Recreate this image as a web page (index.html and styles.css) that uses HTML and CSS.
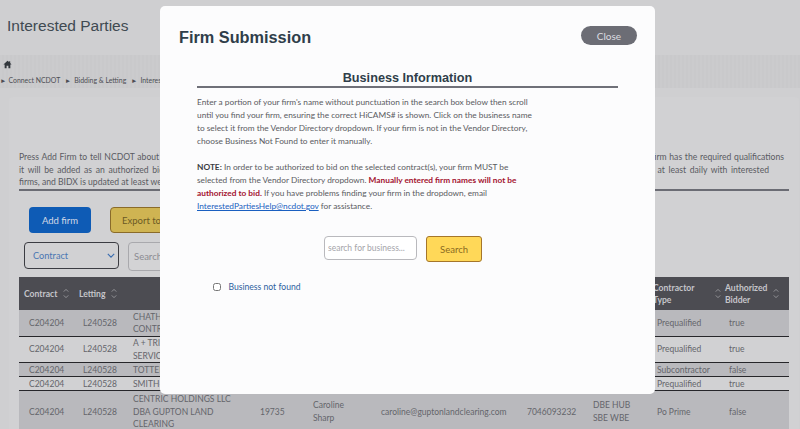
FILE: index.html
```html
<!DOCTYPE html>
<html lang="en">
<head>
  <meta charset="UTF-8">
  <meta name="viewport" content="width=device-width, initial-scale=1.0">
  <title>Interested Parties</title>
  <link rel="stylesheet" href="styles.css">
</head>
<body>
  <h1 class="page-title">Interested Parties</h1>

  <nav class="crumbs">
    <svg class="home-icon" viewBox="0 0 12 12" width="9" height="9"><path d="M6 1 0.6 6h1.6v5h2.6V7.6h2.4V11h2.6V6h1.6L9.6 4.1V1.6H8.2v1.2z" fill="#33383d"/></svg>
    <div class="crumb-line">
      <span class="arrow arrow-first">&#9658;</span><span>Connect NCDOT</span>
      <span class="arrow">&#9658;</span><span>Bidding &amp; Letting</span>
      <span class="arrow">&#9658;</span><span>Interested Parties</span>
    </div>
  </nav>

  <main class="card">
    <div class="intro">
      <p class="line-long">Press Add Firm to tell NCDOT about your firm's interest in bidding on the selected contract or contracts below. NCDOT reviews each submission to confirm that the firm has the required qualifications</p>
      <p class="line-mid">it will be added as an authorized bidder for the selected contract or contracts shown. This list of all interested parties and firms is published online and updated at least daily with interested</p>
      <p>firms, and BIDX is updated at least weekly.</p>
    </div>

    <div class="actions">
      <button class="btn-add">Add firm</button>
      <button class="btn-export">Export to Excel</button>
    </div>

    <div class="filters">
      <div class="filter-select">
        <span>Contract</span>
        <svg viewBox="0 0 10 6" width="8" height="5"><path d="M1 1l4 4 4-4" fill="none" stroke="#3a6db0" stroke-width="1.4"/></svg>
      </div>
      <input class="filter-search" type="text" placeholder="Search">
    </div>

    <table class="parties">
      <colgroup>
        <col class="c-contract"><col class="c-letting"><col class="c-firm"><col class="c-vendor"><col class="c-name">
        <col class="c-email"><col class="c-phone"><col class="c-cert"><col class="c-type"><col class="c-auth">
      </colgroup>
      <thead>
        <tr>
          <th class="first"><div class="th-in"><span>Contract</span><svg class="sort" viewBox="0 0 8 14" width="6" height="11"><path d="M1 4.5 4 1.5l3 3M1 9.5l3 3 3-3" fill="none" stroke="#a9a9ae" stroke-width="1"/></svg></div></th>
          <th><div class="th-in"><span>Letting</span><svg class="sort" viewBox="0 0 8 14" width="6" height="11"><path d="M1 4.5 4 1.5l3 3M1 9.5l3 3 3-3" fill="none" stroke="#a9a9ae" stroke-width="1"/></svg></div></th>
          <th class="th-firm">Firm</th><th>Vendor</th><th>Contact</th><th>Email</th><th>Phone</th><th>Certification</th>
          <th><div class="th-in th-wide"><span>Contractor Type</span><svg class="sort" viewBox="0 0 8 14" width="6" height="11"><path d="M1 4.5 4 1.5l3 3M1 9.5l3 3 3-3" fill="none" stroke="#a9a9ae" stroke-width="1"/></svg></div></th>
          <th class="th-last"><div class="th-in th-wide"><span>Authorized Bidder</span><svg class="sort" viewBox="0 0 8 14" width="6" height="11"><path d="M1 4.5 4 1.5l3 3M1 9.5l3 3 3-3" fill="none" stroke="#a9a9ae" stroke-width="1"/></svg></div></th>
        </tr>
      </thead>
      <tbody>
        <tr class="odd"><td class="first">C204204</td><td>L240528</td><td>CHATHAM<br>CONTRACTING</td><td></td><td></td><td></td><td></td><td></td><td>Prequalified</td><td>true</td></tr>
        <tr><td class="first">C204204</td><td>L240528</td><td>A + TRI<br>SERVICES</td><td></td><td></td><td></td><td></td><td></td><td>Prequalified</td><td>true</td></tr>
        <tr class="odd"><td class="first">C204204</td><td>L240528</td><td>TOTTEN</td><td></td><td></td><td></td><td></td><td></td><td>Subcontractor</td><td>false</td></tr>
        <tr><td class="first">C204204</td><td>L240528</td><td>SMITH-ROWE</td><td></td><td></td><td></td><td></td><td></td><td>Prequalified</td><td>true</td></tr>
        <tr class="odd"><td class="first">C204204</td><td>L240528</td><td>CENTRIC HOLDINGS LLC<br>DBA GUPTON LAND<br>CLEARING</td><td>19735</td><td>Caroline<br>Sharp</td><td>caroline@guptonlandclearing.com</td><td>7046093232</td><td>DBE HUB<br>SBE WBE</td><td>Po Prime</td><td>false</td></tr>
      </tbody>
    </table>
  </main>

  <section class="modal">
    <header class="modal-head">
      <h2>Firm Submission</h2>
      <button class="btn-close">Close</button>
    </header>

    <div class="modal-body">
      <h3>Business Information</h3>
      <p>Enter a portion of your firm's name without punctuation in the search box below then scroll until you find your firm, ensuring the correct HiCAMS# is shown. Click on the business name to select it from the Vendor Directory dropdown. If your firm is not in the Vendor Directory, choose Business Not Found to enter it manually.</p>
      <p><strong>NOTE:</strong> In order to be authorized to bid on the selected contract(s), your firm MUST be selected from the Vendor Directory dropdown. <strong class="warn">Manually entered firm names will not be authorized to bid.</strong> If you have problems finding your firm in the dropdown, email <a href="#">InterestedPartiesHelp@ncdot.gov</a> for assistance.</p>

      <div class="search-row">
        <input class="search-box" type="text" placeholder="search for business...">
        <button class="btn-search">Search</button>
      </div>

      <label class="not-found"><input type="checkbox"> Business not found</label>
    </div>
  </section>
</body>
</html>
```

FILE: styles.css
```css
* {
  box-sizing: border-box;
}
html, body {
  height: 429px;
  overflow: hidden;
}
body {
  margin: 0;
  background: #cfcfd1;
  font-family: Lato, sans-serif;
  color: #55565c;
}
.page-title {
  margin: 0;
  height: 55px;
  padding: 16px 0 0 7px;
  font-family: "Liberation Sans", Arial, sans-serif;
  font-size: 15.5px;
  line-height: 19px;
  font-weight: 400;
  color: #3f4a52;
}
.crumbs {
  height: 33px;
  padding: 5px 0 0 3px;
  background: repeating-linear-gradient(90deg, #cbcbcd 0, #cbcbcd 2px, #c9c9cb 2px, #c9c9cb 4px);
}
.home-icon {
  display: block;
}
.crumb-line {
  margin: 6px 0 0 -3px;
  font-size: 6.9px;
  line-height: 10px;
  color: #4d4e54;
  white-space: nowrap;
}
.arrow {
  font-size: 6.5px;
  margin: 0 3px 0 3px;
}
.arrow-first {
  margin: 0 2px 0 0;
}
.card {
  margin: 9px 1px 0 9px;
  padding: 54px 10px 0 10px;
  height: 340px;
  background: #d1d1d3;
  border-radius: 4px 4px 0 0;
}
.intro {
  height: 40px;
  border-bottom: 2px solid #6b6c74;
  font-size: 8.6px;
  line-height: 12.5px;
  color: #5a5b62;
}
.intro p {
  margin: 0;
  white-space: nowrap;
}
.intro .line-long {
  width: 765px;
  text-align-last: justify;
}
.intro .line-mid {
  width: 750px;
  text-align-last: justify;
}
.actions {
  display: flex;
  gap: 19px;
  margin: 16px 0 0 10px;
}
.btn-add {
  width: 62px;
  height: 26px;
  border: 0;
  border-radius: 4px;
  background: #0e5bb5;
  color: #d3d9e6;
  font: 9.5px Lato, sans-serif;
}
.btn-export {
  width: 100px;
  height: 26px;
  padding: 0 0 0 11px;
  border: 1px solid #8a6b2a;
  border-radius: 4px;
  background: #cfb452;
  color: #6b5a25;
  font: 9.5px Lato, sans-serif;
  text-align: left;
}
.filters {
  display: flex;
  gap: 9px;
  margin: 9px 0 0 5px;
}
.filter-select {
  display: flex;
  align-items: center;
  justify-content: space-between;
  width: 95px;
  height: 27px;
  padding: 0 3px 0 8px;
  border: 1px solid #3b3c42;
  border-radius: 4px;
  background: #d1d1d3;
  color: #4a76b2;
  font-size: 9.2px;
}
.filter-search {
  width: 100px;
  height: 29px;
  padding: 0 5px;
  border: 1px solid #a9a9ad;
  border-radius: 4px;
  background: #d3d3d5;
  font: 9.5px Lato, sans-serif;
}
.filter-search::placeholder {
  color: #8c8c92;
}
.parties {
  width: 770px;
  margin-top: 6px;
  border-spacing: 0;
  table-layout: fixed;
  font-size: 8.5px;
  line-height: 12.5px;
}
.c-contract { width: 60px; }
.c-letting { width: 50px; }
.c-firm { width: 127px; }
.c-vendor { width: 53px; }
.c-name { width: 68px; }
.c-email { width: 146px; }
.c-phone { width: 66px; }
.c-cert { width: 64px; }
.c-type { width: 72px; }
.c-auth { width: 64px; }
.parties th {
  height: 33px;
  padding: 0;
  background: #4c4c52;
  color: #c5c5ca;
  font-weight: 700;
  font-size: 8.6px;
  line-height: 12px;
  text-align: left;
}
.parties th.first {
  padding-left: 5px;
}
.parties th.th-firm {
  padding-left: 40px;
}
.parties th.th-last {
  padding: 0 6px 0 0;
}
.th-in {
  display: flex;
  align-items: center;
  gap: 6px;
}
.th-wide {
  justify-content: space-between;
  padding-right: 4px;
}
.th-wide span {
  width: 48px;
}
.sort {
  flex: none;
}
.parties td {
  padding: 0.5px 4px 0 4px;
  border-bottom: 1px solid #26262a;
  color: #64656b;
  vertical-align: middle;
}
.parties td.first {
  padding-left: 10px;
}
.odd td {
  background: #b9b9bd;
}
.parties tr:last-child td {
  padding-top: 2px;
  border-bottom: 0;
}
.modal {
  position: absolute;
  left: 160px;
  top: 6px;
  width: 495px;
  height: 388px;
  background: #fcfcfd;
  border-radius: 5px;
}
.modal-head {
  display: flex;
  align-items: flex-start;
  justify-content: space-between;
  padding: 21px 18px 0 19px;
}
.modal-head h2 {
  margin: 0;
  font-family: "Liberation Sans", Arial, sans-serif;
  font-size: 16.3px;
  line-height: 21px;
  font-weight: 700;
  color: #2f3e4a;
}
.btn-close {
  width: 56px;
  height: 19px;
  margin-top: -1px;
  padding: 0;
  border: 0;
  border-radius: 10px;
  background: #6c6d75;
  color: #dcdce0;
  font: 10px Lato, sans-serif;
}
.modal-body {
  margin: 22px 37px 0 37px;
}
.modal-body h3 {
  margin: 0 0 8px;
  border-bottom: 2px solid #6f7078;
  font-family: "Liberation Sans", Arial, sans-serif;
  font-size: 12.7px;
  line-height: 16px;
  font-weight: 700;
  color: #2f3e4a;
  text-align: center;
}
.modal-body p {
  width: 335px;
  margin: 0 0 13px;
  font-size: 8.3px;
  line-height: 13px;
  color: #5a5b61;
}
.modal-body p strong {
  color: #3b3c42;
}
.modal-body p .warn {
  color: #a3122f;
}
.modal-body a {
  color: #1a5fc0;
}
.search-row {
  display: flex;
  align-items: flex-start;
  gap: 9px;
  margin: 23px 0 0 127px;
}
.search-box {
  width: 93px;
  height: 24px;
  padding: 0 3px;
  border: 1px solid #b9b9bd;
  border-radius: 4px;
  background: #fff;
  font: 8.5px Lato, sans-serif;
}
.search-box::placeholder {
  color: #a5a5aa;
}
.btn-search {
  width: 56px;
  height: 26px;
  border: 1px solid #a5762a;
  border-radius: 3px;
  background: #ffd858;
  color: #8a6a22;
  font: 9.5px Lato, sans-serif;
}
.not-found {
  display: flex;
  align-items: center;
  gap: 8px;
  margin: 19px 0 0 16px;
  font-size: 8.6px;
  line-height: 12px;
  color: #2d5f9e;
}
.not-found input {
  width: 7.5px;
  height: 7.5px;
  margin: 0;
}
```
